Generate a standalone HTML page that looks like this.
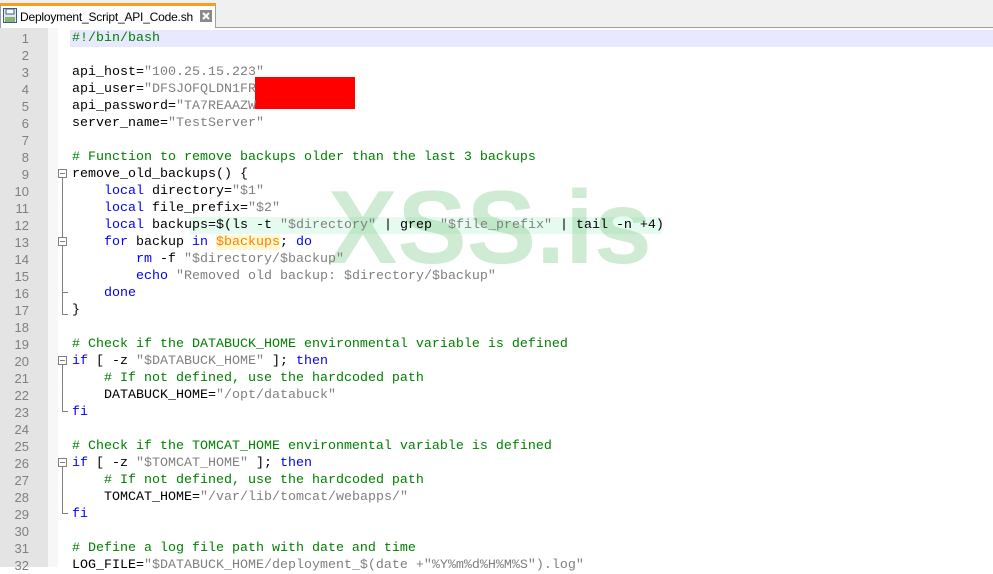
<!DOCTYPE html><html><head><style>
body{margin:0;width:993px;height:567px;overflow:hidden;background:#fff;position:relative;font-family:"Liberation Mono",monospace;}
.top{position:absolute;left:0;top:0;width:993px;height:27px;background:#f0f0f0;border-bottom:1px solid #a0a0a0;}
.tab{position:absolute;left:0;top:3px;width:216px;height:25px;background:#fff;border:1px solid #a0a0a0;border-bottom:none;border-top:3px solid #fa9c1c;box-sizing:border-box;font:12px "Liberation Sans",sans-serif;letter-spacing:-0.2px;}
.gut{position:absolute;left:0;top:28px;width:48px;height:539px;background:#e4e4e4;}
.fm{position:absolute;left:48px;top:28px;width:10px;height:539px;background:repeating-linear-gradient(45deg,#f3f3f3 0 1px,#fbfbfb 1px 2px);}
.ln{position:absolute;left:0;width:29px;text-align:right;color:#808080;font-size:13px;font-family:"Liberation Sans",sans-serif;line-height:17px;}
.l{position:absolute;left:72px;white-space:pre;font-size:13.33px;line-height:17px;color:#000;}
.c{color:#008000}.k{color:#0000ff}.s{color:#808080}.v{color:#ff8000;background:#fff8d0}
.fb{position:absolute;left:58px;width:9px;height:9px;border:1px solid #808080;box-sizing:border-box;background:#fff}
.fb:after{content:"";position:absolute;left:1px;top:3px;width:5px;height:1px;background:#808080}
.vl{position:absolute;left:62px;width:1px;background:#808080}
.el{position:absolute;left:62px;width:6px;height:1px;background:#808080}
</style></head><body>
<div class="top"><div class="tab"><svg style="position:absolute;left:2px;top:2px" width="14" height="15"><rect x="0.5" y="0.5" width="13" height="14" fill="#dfe8f4" stroke="#3a5c8c"/><rect x="3" y="1" width="8" height="5" fill="#fff" stroke="#3a5c8c"/><rect x="2" y="9" width="10" height="5" fill="#8ab46e"/></svg><span style="position:absolute;left:19px;top:4px">Deployment_Script_API_Code.sh</span><svg style="position:absolute;left:199px;top:4px" width="12" height="12"><rect width="12" height="12" fill="#8a8a8a"/><path d="M3 3L9 9M9 3L3 9" stroke="#fff" stroke-width="2"/></svg></div></div>
<div class="gut"></div><div class="fm"></div>
<div style="position:absolute;left:70px;top:30px;width:923px;height:17px;background:#e8e8ff"></div>
<div style="position:absolute;left:255px;top:77px;width:100px;height:32px;background:#ff0000"></div>
<div style="position:absolute;left:190px;top:217px;width:472px;height:17px;background:#e6fbef"></div>
<div style="position:absolute;left:328px;top:176px;font:bold 104px/1 'Liberation Sans',sans-serif;color:rgba(100,190,110,0.3)">XSS.is</div>
<div id="g"></div>
<div class="fb" style="top:169px"></div><div class="vl" style="top:178px;height:137px"></div><div class="el" style="top:314px"></div>
<div class="fb" style="top:237px"></div><div class="vl" style="top:246px;height:46px"></div><div class="el" style="top:292px"></div>
<div class="fb" style="top:356px"></div><div class="vl" style="top:365px;height:46px"></div><div class="el" style="top:411px"></div>
<div class="fb" style="top:458px"></div><div class="vl" style="top:467px;height:46px"></div><div class="el" style="top:513px"></div>
<script>
var L=[
'<span class="c">#!/bin/bash</span>','',
'api_host=<span class="s">"100.25.15.223"</span>',
'api_user=<span class="s">"DFSJOFQLDN1FR</span>',
'api_password=<span class="s">"TA7REAAZW</span>',
'server_name=<span class="s">"TestServer"</span>','',
'<span class="c"># Function to remove backups older than the last 3 backups</span>',
'remove_old_backups() {',
'    <span class="k">local</span> directory=<span class="s">"$1"</span>',
'    <span class="k">local</span> file_prefix=<span class="s">"$2"</span>',
'    <span class="k">local</span> backups=$(ls -t <span class="s">"$directory"</span> | grep <span class="s">"$file_prefix"</span> | tail -n +4)',
'    <span class="k">for</span> backup <span class="k">in</span> <span class="v">$backups</span>; <span class="k">do</span>',
'        <span class="k">rm</span> -f <span class="s">"$directory/$backup"</span>',
'        <span class="k">echo</span> <span class="s">"Removed old backup: $directory/$backup"</span>',
'    <span class="k">done</span>','}','',
'<span class="c"># Check if the DATABUCK_HOME environmental variable is defined</span>',
'<span class="k">if</span> [ -z <span class="s">"$DATABUCK_HOME"</span> ]; <span class="k">then</span>',
'    <span class="c"># If not defined, use the hardcoded path</span>',
'    DATABUCK_HOME=<span class="s">"/opt/databuck"</span>',
'<span class="k">fi</span>','',
'<span class="c"># Check if the TOMCAT_HOME environmental variable is defined</span>',
'<span class="k">if</span> [ -z <span class="s">"$TOMCAT_HOME"</span> ]; <span class="k">then</span>',
'    <span class="c"># If not defined, use the hardcoded path</span>',
'    TOMCAT_HOME=<span class="s">"/var/lib/tomcat/webapps/"</span>',
'<span class="k">fi</span>','',
'<span class="c"># Define a log file path with date and time</span>',
'LOG_FILE=<span class="s">"$DATABUCK_HOME/deployment_$(date +"%Y%m%d%H%M%S").log"</span>'];
var h='';for(var i=0;i<L.length;i++){var t=30+i*17;h+='<div class="ln" style="top:'+t+'px">'+(i+1)+'</div><div class="l" style="top:'+t+'px">'+L[i]+'</div>';}
document.getElementById('g').innerHTML=h;
</script>
</body></html>
